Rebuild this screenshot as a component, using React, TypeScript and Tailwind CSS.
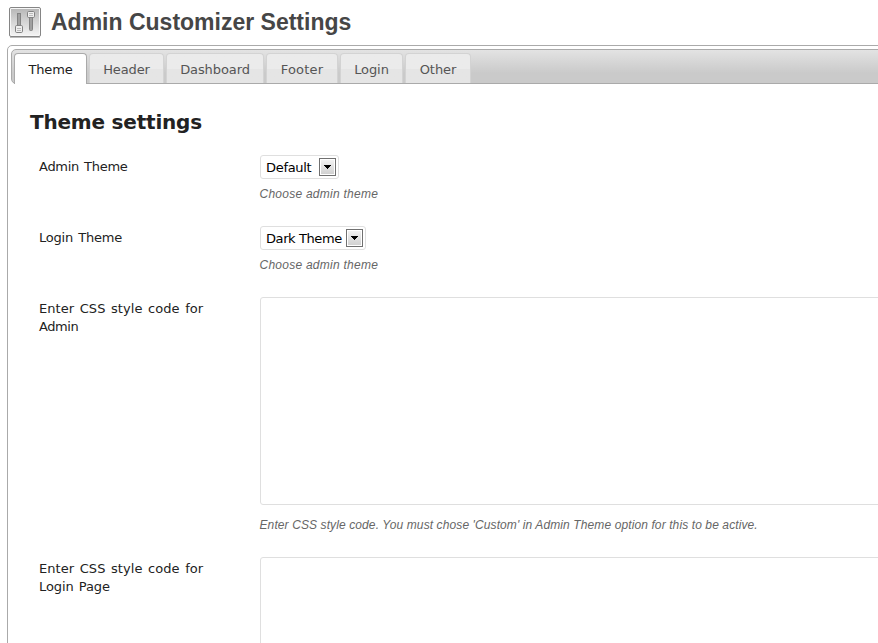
import type { ReactNode } from "react";

const tabs = [
  { name: "Theme", box: "w-[73px] mr-[2px]", text: "tracking-[-0.15px]" },
  { name: "Header", box: "w-[75px] mr-[2px]", text: "tracking-[-0.1px]" },
  { name: "Dashboard", box: "w-[98px] mr-[2px]", text: "tracking-[-0.1px]" },
  { name: "Footer", box: "w-[72px] mr-[2px]", text: "tracking-[0.22px]" },
  { name: "Login", box: "w-[63px] mr-[2px]", text: "tracking-[-0.1px]" },
  { name: "Other", box: "w-[66px]", text: "tracking-[-0.05px]" },
];

function SettingsIcon() {
  return (
    <svg width="32" height="31" viewBox="0 0 32 31" className="shrink-0">
      <defs>
        <linearGradient id="plate" x1="0" y1="0" x2="0" y2="1">
          <stop offset="0" stopColor="#b8b8b8" />
          <stop offset="1" stopColor="#f2f2f2" />
        </linearGradient>
      </defs>
      <rect x="0.5" y="0.5" width="31" height="29" rx="1.5" fill="#f6f6f6" stroke="#858585" />
      <rect x="2" y="2" width="28" height="26" fill="url(#plate)" />
      <path d="M1 30.5h30" stroke="#bdbdbd" />
      <rect x="8.5" y="6.5" width="3" height="14" fill="#a0a0a0" stroke="#828282" />
      <rect x="6.5" y="18.5" width="7" height="7" rx="1.2" fill="#efefef" stroke="#828282" />
      <path d="M8 21.5h4M8 23.5h4" stroke="#bbb" />
      <rect x="20.5" y="9.5" width="3" height="14" rx="1" fill="#a0a0a0" stroke="#828282" />
      <rect x="18.5" y="4.5" width="7" height="6" rx="1.2" fill="#efefef" stroke="#828282" />
      <path d="M20 6.5h4M20 8.5h4" stroke="#bbb" />
    </svg>
  );
}

function Row({ label, height, children }: { label: ReactNode; height: string; children: ReactNode }) {
  return (
    <div className={`flex ${height}`}>
      <div className="w-[221px] shrink-0 pt-[3px] text-[13px] leading-[18px] text-[#222]">{label}</div>
      <div className="flex-1">{children}</div>
    </div>
  );
}

function Select({ value, width, tracking }: { value: string; width: string; tracking: string }) {
  return (
    <div className={`flex h-6 items-center justify-between rounded-[3px] border border-[#dfdfdf] bg-white pl-[5px] pr-[2px] text-[13px] text-black ${width}`}>
      <span className={`whitespace-nowrap pt-[2px] ${tracking}`}>{value}</span>
      <span className="flex h-[18px] w-[17px] shrink-0 items-center justify-center border border-[#707070] bg-linear-to-b from-[#f4f4f4] to-[#cfcfcf] shadow-[inset_0_0_0_1px_#fff]">
        <svg width="7" height="4" viewBox="0 0 7 4" shapeRendering="crispEdges">
          <path d="M0 0h7v1H6v1H5v1H4v1H3V3H2V2H1V1H0z" fill="#000" />
        </svg>
      </span>
    </div>
  );
}

function Hint({ tracking, children }: { tracking: string; children: ReactNode }) {
  return (
    <p className={`-ml-[0.5px] whitespace-nowrap font-['Liberation_Sans',Arial,sans-serif] text-[12px] italic leading-[18px] text-[#666] ${tracking}`}>
      {children}
    </p>
  );
}

export default function App() {
  return (
    <div className="h-[643px] w-full overflow-hidden bg-white pl-[7px] pt-[7px] font-['DejaVu_Sans',Verdana,sans-serif]">
      <header className="flex h-[38px] items-start pl-[2px]">
        <SettingsIcon />
        <h1 className="ml-[10px] whitespace-nowrap font-['Liberation_Sans',Arial,sans-serif] text-[23px] font-bold leading-[30px] text-[#464646]">
          Admin Customizer Settings
        </h1>
      </header>

      <main className="h-[620px] w-[890px] rounded-[5px] border border-[#aaa] p-[3px]">
        <nav className="flex h-[35px] items-end rounded-[5px] rounded-br-none border border-[#aaa] bg-linear-to-b from-[#e3e3e3] to-[#cacaca] to-70% pl-[2px]">
          {tabs.map((tab, index) => (
            <button
              key={tab.name}
              className={`flex justify-center rounded-t-[4px] border border-b-0 pt-[7px] text-[13px] leading-[18px] ${tab.box} ${
                index === 0
                  ? "-mb-px h-[31px] border-[#aaa] bg-white text-[#212121]"
                  : "h-[30px] border-[#d3d3d3] bg-linear-to-b from-[#ebebeb] from-50% to-[#e5e5e5] to-50% text-[#555]"
              }`}
            >
              <span className={tab.text}>{tab.name}</span>
            </button>
          ))}
        </nav>

        <section className="pl-[28px] pt-[27px]">
          <h2 className="-ml-[9px] -mt-px h-[45px] text-[20px] font-bold leading-[24px] tracking-[-0.2px] text-[#222]">Theme settings</h2>
          <Row label={<span className="tracking-[-0.28px] [word-spacing:1.2px]">Admin Theme</span>} height="h-[71px]">
            <Select value="Default" width="w-[79px]" tracking="tracking-[-0.3px]" />
            <div className="mt-[6px]"><Hint tracking="tracking-[0.25px]">Choose admin theme</Hint></div>
          </Row>
          <Row label={<span className="tracking-[-0.2px] [word-spacing:1.2px]">Login Theme</span>} height="h-[71px]">
            <Select value="Dark Theme" width="w-[106px]" tracking="tracking-[-0.4px]" />
            <div className="mt-[6px]"><Hint tracking="tracking-[0.25px]">Choose admin theme</Hint></div>
          </Row>
          <Row
            label={
              <>
                <span className="tracking-[0.05px] [word-spacing:1.4px]">Enter CSS style code for</span>
                <br />
                <span className="tracking-[-0.45px]">Admin</span>
              </>
            }
            height="h-[260px]"
          >
            <textarea className="block h-[208px] w-[700px] resize-none rounded-[3px] border border-[#dfdfdf] outline-none" />
            <div className="mt-[11px]">
              <Hint tracking="tracking-[0.105px]">Enter CSS style code. You must chose 'Custom' in Admin Theme option for this to be active.</Hint>
            </div>
          </Row>
          <Row
            label={
              <>
                <span className="tracking-[0.05px] [word-spacing:1.4px]">Enter CSS style code for</span>
                <br />
                <span className="tracking-[-0.1px] [word-spacing:1.2px]">Login Page</span>
              </>
            }
            height="h-[260px]"
          >
            <textarea className="block h-[208px] w-[700px] resize-none rounded-[3px] border border-[#dfdfdf] outline-none" />
          </Row>
        </section>
      </main>
    </div>
  );
}
